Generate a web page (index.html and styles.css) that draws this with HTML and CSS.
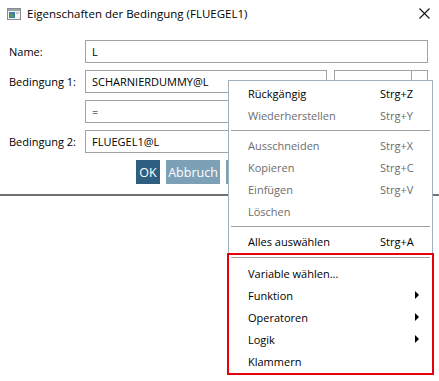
FILE: index.html
```html
<!DOCTYPE html>
<html lang="de">
<head>
<meta charset="utf-8">
<title>Eigenschaften der Bedingung</title>
<link rel="stylesheet" href="styles.css">
</head>
<body>
<div class="dialog">
  <div class="titlebar">
    <svg class="appicon" width="14" height="12" viewBox="0 0 14 12">
      <rect x="0.5" y="0.5" width="13" height="11" fill="#f4f4f4" stroke="#8a8a8a"/>
      <rect x="1" y="1" width="12" height="2" fill="#9aa6b2"/>
      <rect x="2" y="4" width="6" height="6" fill="#3b7fa8"/>
      <rect x="3" y="6" width="3" height="3" fill="#5a9a5a"/>
      <rect x="9" y="4" width="3" height="2" fill="#c8c8c8"/>
    </svg>
    <span class="title">Eigenschaften der Bedingung (FLUEGEL1)</span>
    <svg class="close" width="11" height="11" viewBox="0 0 11 11">
      <path d="M0.5 0.5 L10.5 10.5 M10.5 0.5 L0.5 10.5" stroke="#111" stroke-width="1.1" fill="none"/>
    </svg>
  </div>
  <div class="form">
    <label class="lbl">Name:</label>
    <div class="field"><div class="input full">L</div></div>
    <label class="lbl">Bedingung 1:</label>
    <div class="field">
      <div class="input mid">SCHARNIERDUMMY@L</div>
      <div class="input combo"><span class="combo-main"></span><span class="combo-btn"></span></div>
    </div>
    <span class="lbl"></span>
    <div class="field"><div class="input mid">=</div></div>
    <label class="lbl">Bedingung 2:</label>
    <div class="field"><div class="input full">FLUEGEL1@L</div></div>
  </div>
  <div class="buttons">
    <span class="btn primary">OK</span>
    <span class="btn secondary">Abbruch</span>
    <span class="btn secondary"></span>
  </div>
</div>

<div class="menu">
  <div class="item"><span class="text">Rückgängig</span><span class="key">Strg+Z</span></div>
  <div class="item disabled"><span class="text">Wiederherstellen</span><span class="key">Strg+Y</span></div>
  <div class="sep"></div>
  <div class="item disabled"><span class="text">Ausschneiden</span><span class="key">Strg+X</span></div>
  <div class="item disabled"><span class="text">Kopieren</span><span class="key">Strg+C</span></div>
  <div class="item disabled"><span class="text">Einfügen</span><span class="key">Strg+V</span></div>
  <div class="item disabled"><span class="text">Löschen</span><span class="key"></span></div>
  <div class="sep"></div>
  <div class="item"><span class="text">Alles auswählen</span><span class="key">Strg+A</span></div>
  <div class="sep last"></div>
  <div class="item"><span class="text">Variable wählen...</span></div>
  <div class="item sub"><span class="text">Funktion</span><span class="arrow"></span></div>
  <div class="item sub"><span class="text">Operatoren</span><span class="arrow"></span></div>
  <div class="item sub"><span class="text">Logik</span><span class="arrow"></span></div>
  <div class="item"><span class="text">Klammern</span></div>
</div>
<div class="highlight"></div>
</body>
</html>
```
FILE: styles.css
```css
* { box-sizing: border-box; }
html, body { margin: 0; padding: 0; background: #fff; }
body {
  width: 439px;
  height: 381px;
  overflow: hidden;
  font-family: "Open Sans", "Noto Sans", sans-serif;
  font-size: 11px;
  color: #000;
  position: relative;
}
.dialog {
  height: 196px;
  border-bottom: 2px solid #707070;
}
.titlebar {
  height: 30px;
  display: flex;
  align-items: center;
  padding: 0 9px 4px 7px;
}
.appicon { flex: none; margin-top: 1px; }
.title {
  margin-left: 6px;
  font-size: 11.5px;
  flex: 1;
}
.close { flex: none; }
.form {
  display: grid;
  grid-template-columns: 76px 1fr;
  row-gap: 7px;
  padding: 10px 11px 0 9px;
}
.lbl {
  display: flex;
  align-items: center;
  height: 23px;
  white-space: nowrap;
}
.field { display: flex; gap: 7px; }
.input {
  height: 23px;
  border: 1px solid #a3a3a3;
  padding: 0 6px;
  display: flex;
  align-items: center;
  background: #fff;
}
.input.full { width: 343px; }
.input.mid { width: 242px; }
.input.combo { width: 94px; padding: 0; }
.combo-main { flex: 1; height: 100%; }
.combo-btn { width: 16px; height: 100%; border-left: 1px solid #a3a3a3; }
.buttons {
  display: flex;
  gap: 6px;
  padding: 7px 0 0 136px;
}
.btn {
  height: 24px;
  display: flex;
  align-items: center;
  justify-content: center;
  color: #fff;
  font-size: 12.5px;
  padding: 0 4px;
}
.btn.primary { background: #2f5f80; width: 24px; }
.btn.secondary { background: #7ca0b6; width: 54px; }
.menu {
  position: absolute;
  left: 228px;
  top: 80px;
  width: 205px;
  background: #fff;
  border: 1px solid #9eb0c0;
  padding: 1px 2px 2px 2px;
}
.item {
  height: 22px;
  display: flex;
  align-items: center;
  padding-left: 17px;
  padding-right: 9px;
}
.item .text { flex: 1; }
.item .key { width: 41px; }
.item.disabled { color: #6d6d6d; }
.sep {
  height: 8px;
  display: flex;
  align-items: center;
}
.sep::before {
  content: "";
  display: block;
  width: 100%;
  height: 1px;
  background: #a0a0a0;
}
.sep.last { height: 10px; }
.arrow {
  width: 0;
  height: 0;
  border-top: 4px solid transparent;
  border-bottom: 4px solid transparent;
  border-left: 4px solid #000;
  margin-right: 2px;
}
.highlight {
  position: absolute;
  left: 227px;
  top: 253px;
  width: 207px;
  height: 122px;
  border: 2px solid #e6000a;
  pointer-events: none;
}
```
